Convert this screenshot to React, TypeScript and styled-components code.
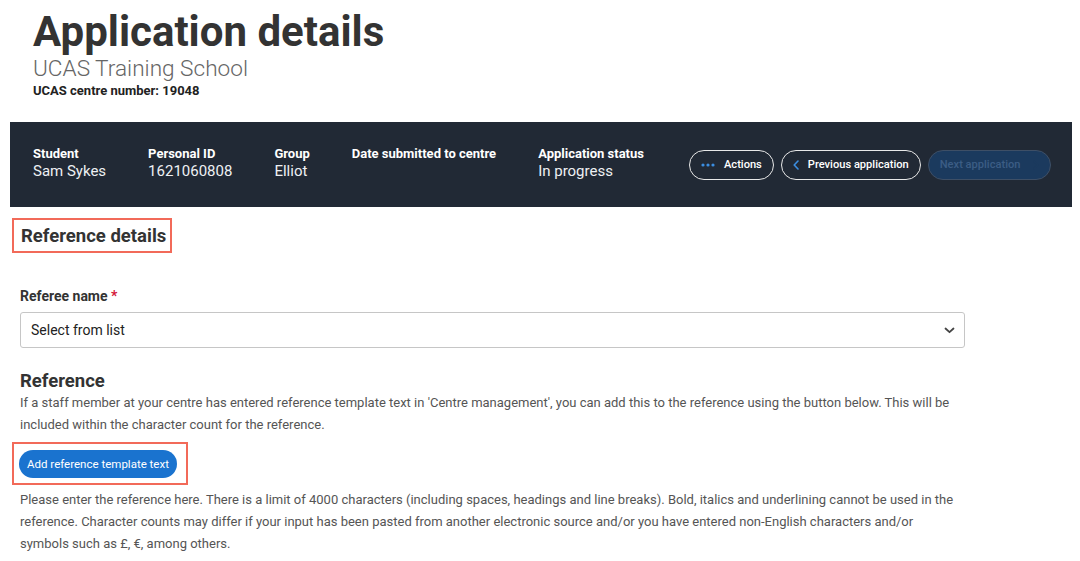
import styled, { createGlobalStyle } from "styled-components";

const Global = createGlobalStyle`
  body {
    margin: 0;
    background: #fff;
    font-family: Roboto, "Liberation Sans", Arial, sans-serif;
  }
`

interface iInfo {
    label: string;
    value?: string;
}

const Info: React.FC<iInfo> = ({ label, value }) => {
    return <InfoHolder>
        <InfoLabel>{label}</InfoLabel>
        <InfoValue>{value || "\u00a0"}</InfoValue>
    </InfoHolder>
}

const Dots = () => (
    <svg width="14" height="4" viewBox="0 0 14 4">
        <circle cx="2" cy="2" r="1.6" fill="#3b8de0" />
        <circle cx="7" cy="2" r="1.6" fill="#3b8de0" />
        <circle cx="12" cy="2" r="1.6" fill="#3b8de0" />
    </svg>
)

const Chev: React.FC<{ dir: "left" | "right"; color: string }> = ({ dir, color }) => (
    <svg width="6" height="10" viewBox="0 0 6 10">
        <path d={dir === "left" ? "M5 1 L1.2 5 L5 9" : "M1 1 L4.8 5 L1 9"} fill="none" stroke={color} strokeWidth="1.6" strokeLinecap="round" strokeLinejoin="round" />
    </svg>
)

const ChevDown = () => (
    <svg width="11" height="7" viewBox="0 0 11 7">
        <path d="M1.5 1.5 L5.5 5.2 L9.5 1.5" fill="none" stroke="#444" strokeWidth="1.8" strokeLinecap="round" strokeLinejoin="round" />
    </svg>
)

const App = () => {
    return (
        <Page>
            <Global />
            <Header>
                <Title>Application details</Title>
                <Subtitle>UCAS Training School</Subtitle>
                <Centre>UCAS centre number: 19048</Centre>
            </Header>

            <Bar>
                <Info label="Student" value="Sam Sykes" />
                <Info label="Personal ID" value="1621060808" />
                <Info label="Group" value="Elliot" />
                <Info label="Date submitted to centre" />
                <Info label="Application status" value="In progress" />
                <Buttons>
                    <PillButton><Dots />Actions</PillButton>
                    <PillButton><Chev dir="left" color="#3b8de0" />Previous application</PillButton>
                    <PillButton disabled>Next application<Chev dir="right" color="#1b3a5e" /></PillButton>
                </Buttons>
            </Bar>

            <Content>
                <Marked pad="6px 4px 4px 7px">
                    <SectionTitle>Reference details</SectionTitle>
                </Marked>

                <Label>Referee name <Star>*</Star></Label>
                <Select>
                    <span>Select from list</span>
                    <ChevDown />
                </Select>

                <SubTitle>Reference</SubTitle>
                <Para>
                    If a staff member at your centre has entered reference template text in 'Centre management', you can add this to the reference using the button below. This will be included within the character count for the reference.
                </Para>
                <Marked pad="6px 9px 5px 5px" top="6px">
                    <BlueButton>Add reference template text</BlueButton>
                </Marked>
                <Para top="4px">
                    Please enter the reference here. There is a limit of 4000 characters (including spaces, headings and line breaks). Bold, italics and underlining cannot be used in the reference. Character counts may differ if your input has been pasted from another electronic source and/or you have entered non-English characters and/or symbols such as £, €, among others.
                </Para>
            </Content>
        </Page>
    )
}

export default App;

const Page = styled.div`
    width: 1080px;
    min-height: 561px;
    background: #fff;
`
const Header = styled.div`
    padding: 8px 33px 0;
    color: #333;
`
const Title = styled.h1`
    margin: 0;
    font-size: 42px;
    font-weight: 700;
    line-height: 48px;
    color: #333;
`
const Subtitle = styled.div`
    font-size: 22.6px;
    font-weight: 300;
    line-height: 26px;
    color: #666;
`
const Centre = styled.div`
    margin-top: 1px;
    font-size: 13px;
    font-weight: 700;
    line-height: 16px;
    color: #222;
`
const Bar = styled.div`
    margin: 23px 8px 0 10px;
    height: 85px;
    background: #212935;
    display: flex;
    align-items: center;
    gap: 42px;
    padding: 0 0 0 23px;
    box-sizing: border-box;
    white-space: nowrap;
`
const InfoHolder = styled.div`
    display: flex;
    flex-direction: column;
    flex-shrink: 0;
    color: #fff;
    margin-top: -3px;
`
const InfoLabel = styled.div`
    font-size: 13px;
    font-weight: 700;
    line-height: 16px;
`
const InfoValue = styled.div`
    font-size: 15px;
    font-weight: 400;
    line-height: 18px;
    color: #eef0f3;
`
const Buttons = styled.div`
    display: flex;
    flex-shrink: 0;
    gap: 7px;
    margin-left: 3px;
`
const PillButton = styled.button`
    height: 30px;
    display: flex;
    align-items: center;
    gap: 9px;
    padding: 0 11px;
    border-radius: 15px;
    border: 1.5px solid #e8e8e8;
    background: transparent;
    color: #fff;
    white-space: nowrap;
    font-family: Roboto, "Liberation Sans", Arial, sans-serif;
    font-size: 11.1px;
    font-weight: 500;

    &:disabled {
        background: #1b3a5e;
        border-color: #3e4f66;
        color: #3c5d85;
        gap: 13px;
    }
`
const Content = styled.div`
    padding: 11px 0 0 20px;
    width: 945px;
    color: #333;
`
const Marked = styled.div<{ pad: string; top?: string }>`
    display: inline-block;
    border: 2px solid #f26a59;
    padding: ${({ pad }) => pad};
    margin-top: ${({ top }) => top || "0"};
    margin-left: -8px;
`
const SectionTitle = styled.h2`
    margin: 0;
    font-size: 18.5px;
    font-weight: 700;
    line-height: 21px;
    color: #333;
`
const Label = styled.div`
    margin-top: 33px;
    font-size: 14px;
    font-weight: 700;
    line-height: 20px;
    color: #333;
`
const Star = styled.span`
    color: #d4173a;
`
const Select = styled.div`
    margin-top: 6px;
    height: 36px;
    box-sizing: border-box;
    border: 1px solid #c6c6c6;
    border-radius: 3px;
    display: flex;
    align-items: center;
    justify-content: space-between;
    padding: 0 9px 0 10px;
    font-size: 14px;
    color: #222;
`
const SubTitle = styled.h3`
    margin: 22px 0 0;
    font-size: 18.5px;
    font-weight: 700;
    line-height: 22px;
    color: #333;
`
const Para = styled.p<{ top?: string }>`
    margin: ${({ top }) => top || "0"} 0 0;
    font-size: 13px;
    line-height: 22px;
    color: #555;
`
const BlueButton = styled.button`
    height: 28px;
    width: 158px;
    border: none;
    border-radius: 14px;
    background: #1a73cf;
    color: #fff;
    font-family: Roboto, "Liberation Sans", Arial, sans-serif;
    font-size: 11.5px;
    font-weight: 400;
    display: block;
`
